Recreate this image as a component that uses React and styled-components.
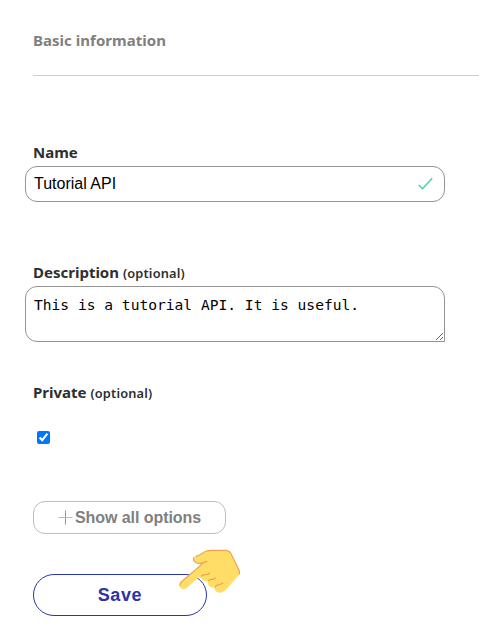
import React, { useState } from "react";
import styled, { createGlobalStyle } from "styled-components";

const GlobalStyle = createGlobalStyle`
  * { box-sizing: border-box; }
  body { margin: 0; background: #fff; color: #2e2f30; overflow: hidden; }
`;

const Form = styled.form`
  display: flex;
  flex-direction: column;
  align-items: flex-start;
  width: 479px;
  height: 642px;
  padding: 28px 0 0 33px;
  font-family: "Noto Sans", "Open Sans", sans-serif;
`;

const SectionTitle = styled.h2`
  width: 100%;
  height: 48px;
  margin: 0 0 65px;
  border-bottom: 1px solid #cdcdcd;
  color: #808080;
  font-size: 15px;
  font-weight: 700;
  line-height: 24px;
  letter-spacing: 0.03px;
`;

const Field = styled.div`
  display: flex;
  flex-direction: column;
  align-items: flex-start;
  height: ${(p) => p.$height}px;
`;

const Label = styled.label`
  height: 25px;
  font-size: 15px;
  font-weight: 700;
  line-height: 22px;
  white-space: nowrap;
`;

const Optional = styled.span`
  font-size: 12.8px;
  font-weight: 600;
  letter-spacing: 0.18px;
`;

const InputFrame = styled.div`
  display: flex;
  align-items: center;
  width: 420px;
  height: 36px;
  margin-left: -8px;
  padding: 0 11px 0 8px;
  border: 1px solid #949494;
  border-radius: 12px;
`;

const TextInput = styled.input`
  flex: 1;
  min-width: 0;
  padding: 0;
  border: 0;
  outline: 0;
  background: none;
  color: #000;
  font: 16px/20px "Liberation Sans", Arial, sans-serif;
`;

const TextArea = styled.textarea`
  width: 420px;
  height: 56px;
  margin: 0 0 0 -8px;
  padding: 8px;
  border: 1px solid #949494;
  border-radius: 12px 12px 0 12px;
  outline: 0;
  color: #000;
  font: 14.6px/19px "DejaVu Sans Mono", monospace;
  overflow: hidden;
`;

const Checkbox = styled.input`
  width: 13px;
  height: 13px;
  margin: 25px 0 0 4px;
`;

const OptionsButton = styled.button`
  display: flex;
  align-items: center;
  justify-content: center;
  gap: 2px;
  width: 193px;
  height: 33px;
  margin-bottom: 40px;
  padding: 0;
  border: 1px solid #bdbdbd;
  border-radius: 12px;
  background: #fff;
  color: #808080;
  font: bold 16px/18px "Liberation Sans", Arial, sans-serif;
  letter-spacing: -0.06px;
`;

const SaveArea = styled.div`
  position: relative;
`;

const SaveButton = styled.button`
  width: 174px;
  height: 42px;
  padding: 0;
  border: 1px solid #2b35a8;
  border-radius: 21px;
  background: #fff;
  color: #2b35a8;
  font: bold 18px/20px "Liberation Sans", Arial, sans-serif;
  letter-spacing: 0.6px;
`;

const Pointer = styled.svg`
  position: absolute;
  left: 137px;
  top: -34px;
  pointer-events: none;
`;

function CheckIcon() {
  return (
    <svg width="16" height="14" viewBox="0 0 16 14" fill="none">
      <path d="M1.7 8 5.5 11.8 15.2 1.2" stroke="#45cfa0" strokeWidth="1.3" />
    </svg>
  );
}

function PlusIcon() {
  return (
    <svg width="15" height="16" viewBox="0 0 15 16" fill="none">
      <path d="M7.5 0.5V14.5" stroke="#8996a5" />
      <path d="M0.5 7.5H14.5" stroke="#b8b8b8" />
    </svg>
  );
}

function PointingHand() {
  return (
    <Pointer width="80" height="60" viewBox="0 0 240 180" fill="none">
      <path
        d="M30 141C27 133 31 128 37 123L78 88C86 81 94 76 99 68C91 71 80 71 74 65C67 58 70 52 78 49C88 47 99 37 109 33C114 31 120 31 126 31H164C173 31 178 33 182 39L204 84C210 95 211 100 204 108L172 145C165 153 158 158 150 158C140 159 133 152 134 142C124 143 114 138 113 128L114 122C104 126 96 120 92 113L86 112L51 143C42 150 34 149 30 141Z"
        fill="#ffdd67"
      />
      <g stroke="#eba352" strokeWidth="3.4" strokeLinecap="round" strokeLinejoin="round">
        <path d="M30 137C28 131 32 127 37 123L78 88C86 81 94 76 99 68C91 71 80 71 74 65C70 61 70 56 72 53M78 49C88 47 99 37 109 33C114 31 120 31 126 31H164C173 31 178 33 182 39L204 84C208 91 210 96 208 102" />
        <path d="M99 68C103 66 107 64 111 65" />
        <path d="M94 108C98 104 101 104 107 104C112 104 116 102 119 99" />
        <path d="M115 123C118 118 122 118 126 118C131 118 133 117 136 114" />
        <path d="M135 142C137 137 142 135 147 134C152 133 155 132 158 129" />
      </g>
    </Pointer>
  );
}

export default function App() {
  const [name, setName] = useState("Tutorial API");
  const [description, setDescription] = useState("This is a tutorial API. It is useful.");
  const [isPrivate, setPrivate] = useState(true);

  return (
    <>
      <GlobalStyle />
      <Form onSubmit={(e) => e.preventDefault()}>
        <SectionTitle>Basic information</SectionTitle>
        <Field $height={120}>
          <Label htmlFor="name">Name</Label>
          <InputFrame>
            <TextInput id="name" value={name} onChange={(e) => setName(e.target.value)} />
            <CheckIcon />
          </InputFrame>
        </Field>
        <Field $height={120}>
          <Label htmlFor="description">
            Description <Optional>(optional)</Optional>
          </Label>
          <TextArea
            id="description"
            spellCheck={false}
            value={description}
            onChange={(e) => setDescription(e.target.value)}
          />
        </Field>
        <Field $height={120}>
          <Label htmlFor="private">
            Private <Optional>(optional)</Optional>
          </Label>
          <Checkbox
            id="private"
            type="checkbox"
            checked={isPrivate}
            onChange={(e) => setPrivate(e.target.checked)}
          />
        </Field>
        <OptionsButton type="button">
          <PlusIcon />
          Show all options
        </OptionsButton>
        <SaveArea>
          <SaveButton type="submit">Save</SaveButton>
          <PointingHand />
        </SaveArea>
      </Form>
    </>
  );
}
